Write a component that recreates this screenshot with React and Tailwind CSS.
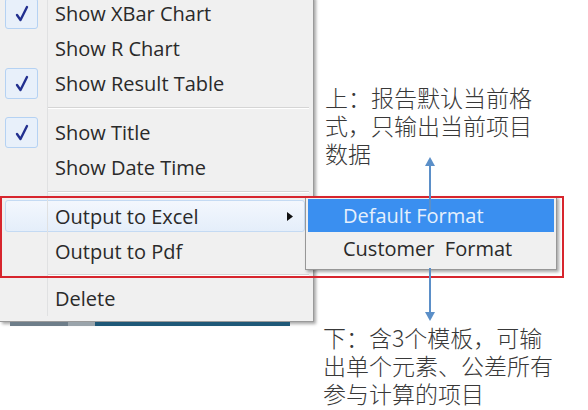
import React from "react";

const menuFont = { fontFamily: '"Open Sans", "Noto Sans", sans-serif' };
const cjkFont = { fontFamily: '"Noto Sans CJK SC", "Noto Sans", sans-serif' };

function Check() {
  return (
    <div className="ml-[5px] w-[33px] h-[31px] rounded-[3px] border border-[#b5d2f3] bg-[#e8f0fa] flex items-center justify-center">
      <svg width="14" height="17" viewBox="0 0 14 17">
        <path d="M2 10 L5.5 15 L12 2" fill="none" stroke="#23308f" strokeWidth="2.4" strokeLinejoin="round" strokeLinecap="round" />
      </svg>
    </div>
  );
}

function Row({ label, checked, highlight, submenu }) {
  return (
    <div className="relative flex h-[35px] items-stretch">
      {highlight && (
        <div className="absolute left-[5px] right-[8px] top-[1px] bottom-[2px] rounded-[3px] border border-[#c4daf3] bg-gradient-to-b from-[#f3f7fd] to-[#e4eefa]" />
      )}
      <div className="relative w-[48px] shrink-0 border-r border-[#e0e1e2] flex items-center">
        {checked && <Check />}
      </div>
      <div className="relative flex-1 flex items-center pl-[7px] text-[20px] text-[#2a2a2a]" style={menuFont}>
        {label}
      </div>
      {submenu && (
        <div className="relative flex items-center pr-[20px]">
          <svg width="6" height="9" viewBox="0 0 6 9">
            <path d="M0 0 L6 4.5 L0 9 Z" fill="#111" />
          </svg>
        </div>
      )}
    </div>
  );
}

function Sep({ h = 14 }) {
  return (
    <div className="flex items-stretch" style={{ height: h }}>
      <div className="w-[48px] shrink-0 border-r border-[#e0e1e2]" />
      <div className="flex-1 flex items-center pr-[4px]">
        <div className="w-full h-px bg-[#d5d5d5] border-b border-white box-content" />
      </div>
    </div>
  );
}

function Line({ children }) {
  return (
    <div className="h-[28px]">
      <span className="inline-block leading-[28px] h-[28px]">{children}</span>
    </div>
  );
}

export default function App() {
  return (
    <div className="relative w-[588px] h-[410px] bg-white overflow-hidden flex">
      {/* Left context menu */}
      <div className="flex flex-col shrink-0 w-[314px]">
        <div className="mt-[-4px] w-[314px] bg-[#f0f0f0] border-r border-b border-[#9a9a9a] shadow-[2px_2px_3px_rgba(0,0,0,0.35)] pb-[5px]">
          <Row label="Show XBar Chart" checked />
          <Row label="Show R Chart" />
          <Row label="Show Result Table" checked />
          <Sep />
          <Row label="Show Title" checked />
          <Row label="Show Date Time" />
          <Sep />
          <Row label="Output to Excel" highlight submenu />
          <Row label="Output to Pdf" />
          <Sep h={12} />
          <Row label="Delete" />
        </div>
        <div className="ml-[10px] w-[280px] h-[4px] flex">
          <div className="w-[58px] bg-[#6d7d89]" />
          <div className="w-[27px] bg-[#9aa4ab]" />
          <div className="flex-1 bg-[#1e5878]" />
        </div>
      </div>

      {/* Right annotations */}
      <div className="flex-1 flex flex-col text-[23px] font-light text-[#383838]" style={cjkFont}>
        <div className="mt-[80px] pl-[11px] w-[240px]">
          <Line>上：报告默认当前格</Line>
          <Line>式，只输出当前项目</Line>
          <Line>数据</Line>
        </div>
        <div className="mt-[156px] pl-[9px]">
          <Line>下：含3个模板，可输</Line>
          <Line>出单个元素、公差所有</Line>
          <Line>参与计算的项目</Line>
        </div>
      </div>

      {/* Submenu overlay */}
      <div
        className="absolute left-[305px] top-[196px] w-[252px] h-[74px] bg-[#f0f0f0] border border-[#979797] shadow-[2px_2px_3px_rgba(0,0,0,0.35)] p-[2px] text-[20px]"
        style={menuFont}
      >
        <div className="h-[33px] bg-[#3a8ff0] flex items-center pl-[35px] text-[#e6f0fc]">Default Format</div>
        <div className="h-[33px] flex items-center pl-[35px] text-[#2a2a2a] whitespace-pre">Customer  Format</div>
      </div>

      {/* Red highlight frame */}
      <div className="absolute left-0 top-[196px] w-[564px] h-[82px] border-2 border-[#d7252d]" />

      {/* Up arrow */}
      <svg className="absolute left-[424px] top-[157px]" width="12" height="55" viewBox="0 0 12 55">
        <line x1="6" y1="6" x2="6" y2="55" stroke="#5b8fc8" strokeWidth="2" />
        <path d="M6 0 L11 9 L1 9 Z" fill="#5b8fc8" />
      </svg>

      {/* Down arrow */}
      <svg className="absolute left-[424px] top-[268px]" width="12" height="54" viewBox="0 0 12 54">
        <line x1="6" y1="0" x2="6" y2="46" stroke="#5b8fc8" strokeWidth="2" />
        <path d="M6 53 L11 44 L1 44 Z" fill="#5b8fc8" />
      </svg>
    </div>
  );
}
